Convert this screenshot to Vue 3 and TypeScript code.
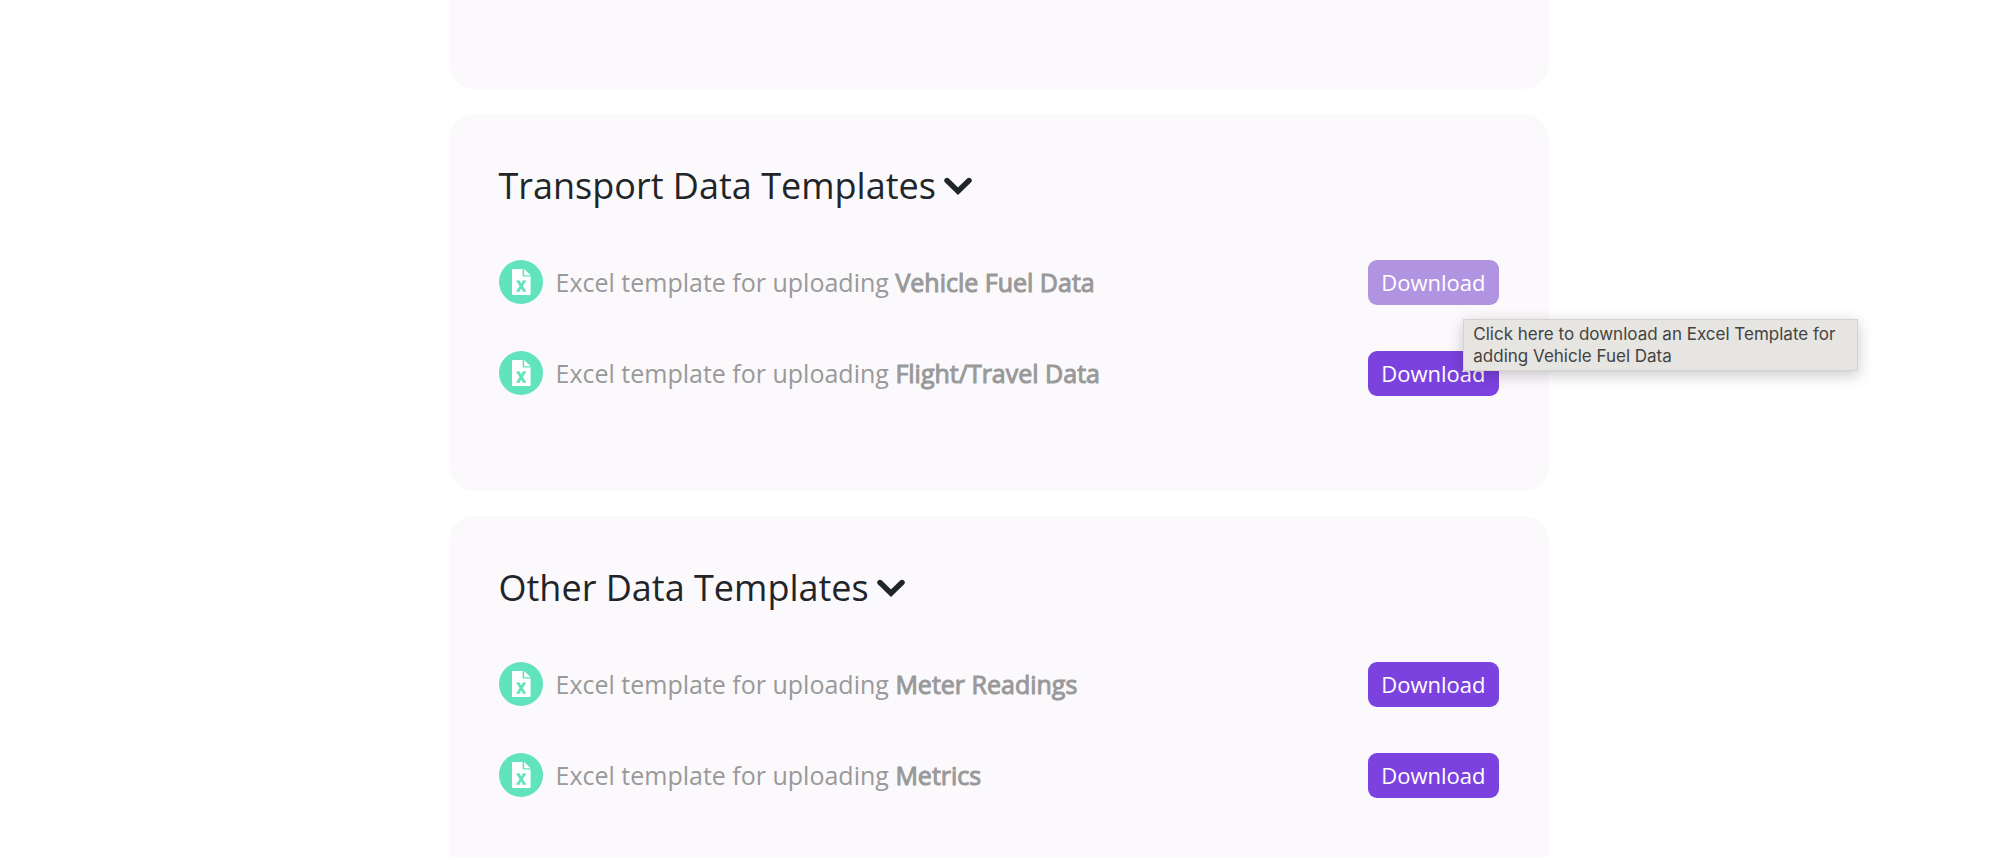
<script setup lang="ts">
import { reactive } from 'vue'

interface Template {
  name: string
  tip?: boolean
}

interface Group {
  title: string
  open: boolean
  templates: Template[]
}

const groups = reactive<Group[]>([
  {
    title: 'Transport Data Templates',
    open: true,
    templates: [{ name: 'Vehicle Fuel Data', tip: true }, { name: 'Flight/Travel Data' }],
  },
  {
    title: 'Other Data Templates',
    open: true,
    templates: [{ name: 'Meter Readings' }, { name: 'Metrics' }],
  },
])
</script>

<template>
  <main class="page">
    <section class="card card-tail" aria-hidden="true"></section>
    <section v-for="group in groups" :key="group.title" class="card">
      <h2 class="heading">
        <button class="toggle" type="button" :aria-expanded="group.open" @click="group.open = !group.open">
          <span>{{ group.title }}</span>
          <svg class="chevron" viewBox="0 0 28 20" aria-hidden="true">
            <path d="M3 4.500 L14 15.200 L25 4.500" fill="none" stroke="currentColor" stroke-width="5.400" stroke-linecap="round" />
          </svg>
        </button>
      </h2>
      <ul v-if="group.open" class="list">
        <li v-for="item in group.templates" :key="item.name" class="row">
          <svg class="badge" viewBox="0 0 44 44" aria-hidden="true">
            <circle cx="22" cy="22" r="22" fill="#61e3bd" />
            <path d="M14 9 H23.600 V16.400 H31.600 V34 Q31.600 35 30.600 35 H14 Q13 35 13 34 V10 Q13 9 14 9 Z" fill="#fff" />
            <path d="M25.200 9 L31.600 15.200 H25.200 Z" fill="#fff" />
            <path d="M19 21 L25.400 31 M25.400 21 L19 31" fill="none" stroke="#61e3bd" stroke-width="2.800" />
            <path d="M17.400 21.200 H20.600 M23.800 21.200 H27 M17.400 31 H20.600 M23.800 31 H27" stroke="#61e3bd" stroke-width="1.400" />
          </svg>
          <p class="label">Excel template for uploading <strong>{{ item.name }}</strong></p>
          <div class="action">
            <button
              class="download"
              :class="{ hovered: item.tip }"
              type="button"
              :aria-describedby="item.tip ? 'download-tip' : undefined"
            >Download</button>
            <div v-if="item.tip" id="download-tip" class="tooltip" role="tooltip">
              Click here to download an Excel Template for adding {{ item.name }}
            </div>
          </div>
        </li>
      </ul>
    </section>
  </main>
</template>

<style>
body {
  background: #fff;
}
</style>

<style scoped>
.page {
  box-sizing: border-box;
  display: flex;
  flex-direction: column;
  align-items: center;
  gap: 25px;
  height: 100vh;
  padding-right: 3px;
  overflow: hidden;
  font-family: "Open Sans", "Noto Sans", sans-serif;
}
.card {
  box-sizing: border-box;
  flex: none;
  width: 100%;
  max-width: 1100px;
  padding: 48px 50px 95px;
  border-radius: 25px;
  background: #fbf9fc;
}
.card-tail {
  padding: 0 0 89px;
  border-radius: 0 0 25px 25px;
}
.heading {
  margin: 0 0 50px;
  font-size: 36px;
  font-weight: 400;
  line-height: 48px;
}
.toggle {
  display: flex;
  align-items: center;
  gap: 8px;
  padding: 0;
  border: 0;
  background: none;
  color: #1f2529;
  font: inherit;
  cursor: pointer;
}
.chevron {
  width: 28px;
  height: 20px;
}
.list {
  display: flex;
  flex-direction: column;
  gap: 46px;
  margin: 0;
  padding: 0;
  list-style: none;
}
.row {
  display: flex;
  align-items: flex-start;
  height: 45px;
}
.badge {
  flex: none;
  width: 44px;
  height: 44px;
  margin-right: 13px;
}
.label {
  flex: 1;
  margin: 0;
  color: #999;
  font-size: 25px;
  line-height: 44px;
}
.label strong {
  font-weight: 400;
  -webkit-text-stroke: 1px currentColor;
}
.action {
  position: relative;
}
.download {
  display: block;
  height: 45px;
  padding: 0 13px;
  border: 0;
  border-radius: 9px;
  background: #7c42df;
  color: #fff;
  font-family: inherit;
  font-size: 22px;
  line-height: 45px;
  cursor: pointer;
}
.download.hovered {
  background: #b094e2;
}
.tooltip {
  position: absolute;
  z-index: 1;
  top: 59px;
  left: 95px;
  box-sizing: border-box;
  width: 395px;
  padding: 3px 9px;
  border: 1px solid #d4d3d1;
  background: #e6e5e1;
  box-shadow: 0 4px 14px rgba(0, 0, 0, 0.22);
  color: #434341;
  font-family: Inter, sans-serif;
  font-size: 17px;
  line-height: 22px;
}
</style>
